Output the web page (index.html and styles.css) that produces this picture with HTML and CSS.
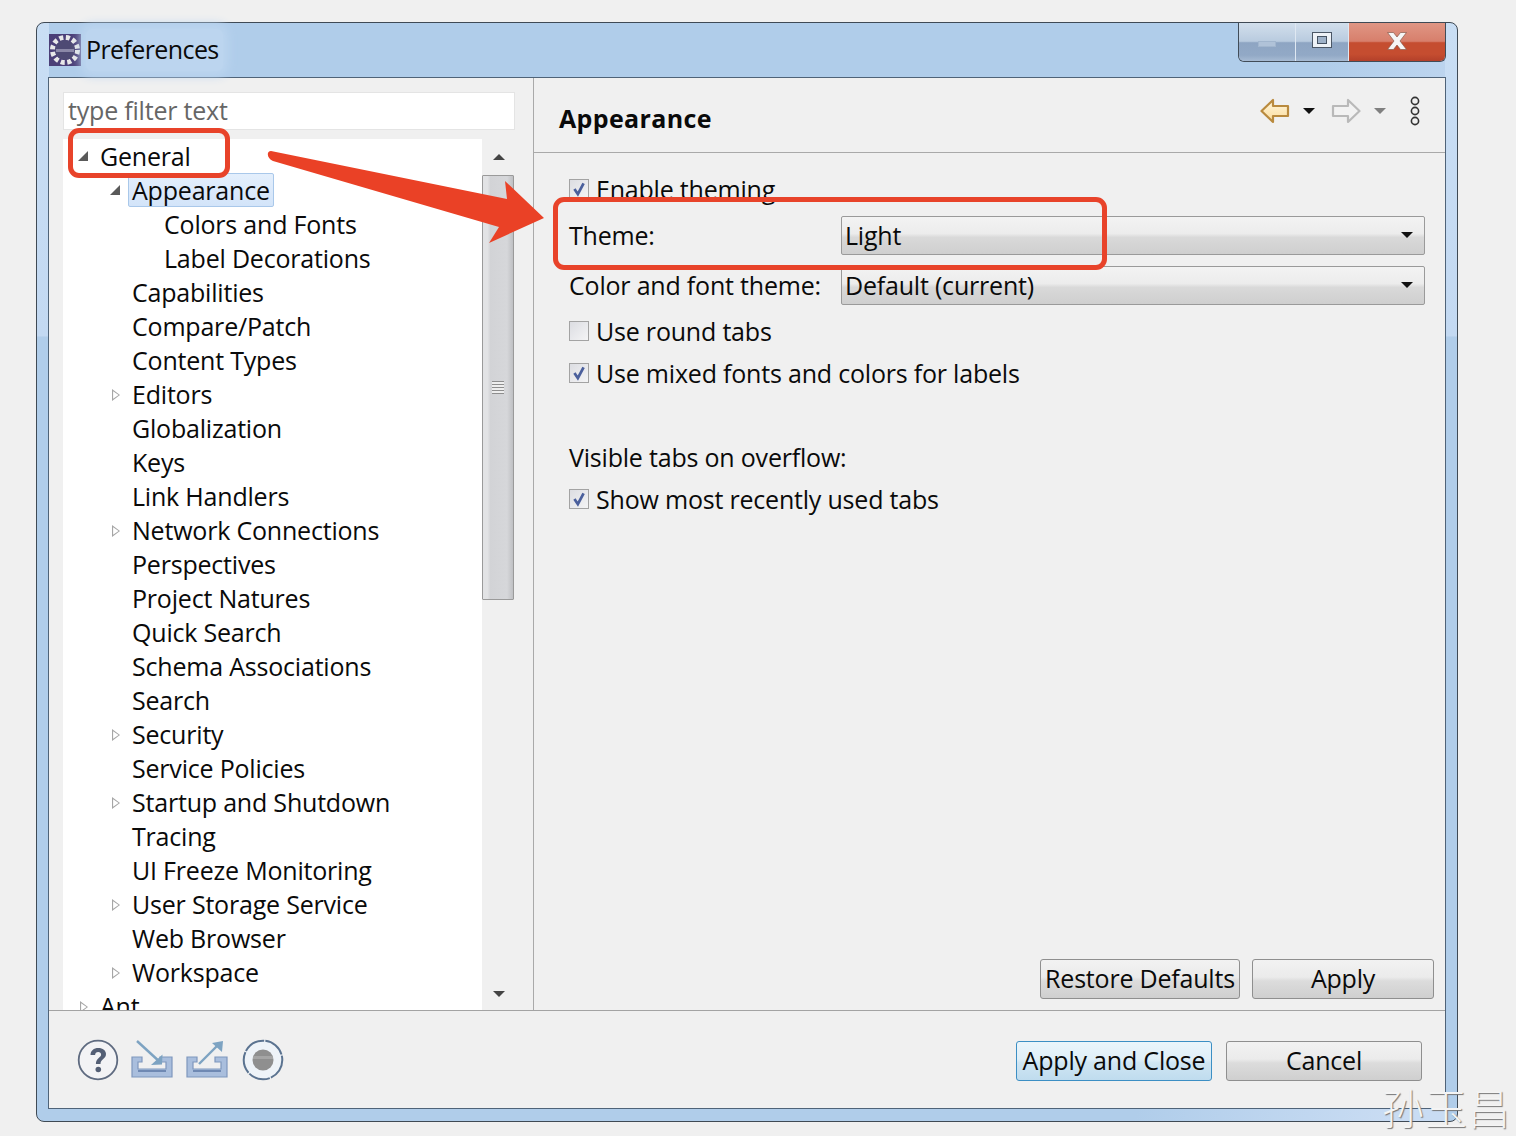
FILE: index.html
```html
<!DOCTYPE html>
<html lang="en">
<head>
<meta charset="utf-8">
<title>Preferences</title>
<link rel="stylesheet" href="styles.css">
</head>
<body>
<div class="window">
  <header class="titlebar">
    <div class="title">
      <svg class="app-icon" width="32" height="32" viewBox="0 0 32 32">
        <rect width="32" height="32" fill="#4b3f78"/>
        <circle cx="16" cy="16" r="12.5" fill="none" stroke="#e8e8e8" stroke-width="5" stroke-dasharray="4 2.6"/>
        <circle cx="16" cy="16" r="10" fill="#4e4a74"/>
        <rect x="7" y="15" width="18" height="3" fill="#8b88a8"/>
      </svg>
      <span class="title-text">Preferences</span>
    </div>
    <div class="caption">
      <div class="cap cap-min"><span class="min-glyph"></span></div>
      <div class="cap cap-max"><span class="max-glyph"><span></span></span></div>
      <div class="cap cap-close">
        <svg width="20" height="18" viewBox="0 0 20 18"><path d="M.5.5h6L10 5l3.500-4.500h6L13 9l6.500 8.500h-6L10 13l-3.500 4.500h-6L7 9z" fill="#f6f6f6" stroke="#8a5a4c" stroke-width=".7"/></svg>
      </div>
    </div>
  </header>

  <div class="client">
    <div class="panes">
      <aside class="left">
        <div class="filter">type filter text</div>
        <div class="tree-wrap">
          <ul class="tree">
            <li class="row l0"><i class="tw open"></i>General</li>
            <li class="row l1"><i class="tw open"></i><span class="sel">Appearance</span></li>
            <li class="row l2"><i class="tw"></i>Colors and Fonts</li>
            <li class="row l2"><i class="tw"></i>Label Decorations</li>
            <li class="row l1"><i class="tw"></i>Capabilities</li>
            <li class="row l1"><i class="tw"></i>Compare/Patch</li>
            <li class="row l1"><i class="tw"></i>Content Types</li>
            <li class="row l1"><i class="tw closed"></i>Editors</li>
            <li class="row l1"><i class="tw"></i>Globalization</li>
            <li class="row l1"><i class="tw"></i>Keys</li>
            <li class="row l1"><i class="tw"></i>Link Handlers</li>
            <li class="row l1"><i class="tw closed"></i>Network Connections</li>
            <li class="row l1"><i class="tw"></i>Perspectives</li>
            <li class="row l1"><i class="tw"></i>Project Natures</li>
            <li class="row l1"><i class="tw"></i>Quick Search</li>
            <li class="row l1"><i class="tw"></i>Schema Associations</li>
            <li class="row l1"><i class="tw"></i>Search</li>
            <li class="row l1"><i class="tw closed"></i>Security</li>
            <li class="row l1"><i class="tw"></i>Service Policies</li>
            <li class="row l1"><i class="tw closed"></i>Startup and Shutdown</li>
            <li class="row l1"><i class="tw"></i>Tracing</li>
            <li class="row l1"><i class="tw"></i>UI Freeze Monitoring</li>
            <li class="row l1"><i class="tw closed"></i>User Storage Service</li>
            <li class="row l1"><i class="tw"></i>Web Browser</li>
            <li class="row l1"><i class="tw closed"></i>Workspace</li>
            <li class="row l0"><i class="tw closed"></i>Ant</li>
          </ul>
          <div class="scrollbar">
            <div class="sb-arrow"><span class="tri-up"></span></div>
            <div class="sb-track">
              <div class="sb-thumb"><span class="grip"></span></div>
            </div>
            <div class="sb-arrow sb-down"><span class="tri-down"></span></div>
          </div>
        </div>
      </aside>

      <main class="right">
        <div class="page-head">
          <h1>Appearance</h1>
          <div class="nav-tools">
            <svg class="nav-arrow" width="30" height="26" viewBox="0 0 30 26"><defs><linearGradient id="bk" x1="0" y1="0" x2="0" y2="1"><stop offset="0" stop-color="#fff6dc"/><stop offset="1" stop-color="#fbdc9c"/></linearGradient></defs><path d="M1.500 13 13 2v6h15v10H13v6z" fill="url(#bk)" stroke="#b98a3e" stroke-width="2.200" stroke-linejoin="round"/></svg>
            <span class="drop dark"></span>
            <svg class="nav-arrow fwd" width="30" height="26" viewBox="0 0 30 26"><path d="M28.500 13 17 2v6H2v10h15v6z" fill="#f2f2f2" stroke="#b9b9b9" stroke-width="2.200" stroke-linejoin="round"/></svg>
            <span class="drop gray"></span>
            <svg class="more" width="12" height="30" viewBox="0 0 12 30"><g fill="none" stroke="#333" stroke-width="1.600"><circle cx="6" cy="5" r="3.600"/><circle cx="6" cy="15" r="3.600"/><circle cx="6" cy="25" r="3.600"/></g></svg>
          </div>
        </div>

        <div class="form">
          <label class="check first"><span class="box on"><svg width="16" height="16" viewBox="0 0 14 14"><path d="M3 7l3 4.500L11 2" fill="none" stroke="#4a5f9c" stroke-width="2.400"/></svg></span>Enable theming</label>
          <div class="field theme-field"><span class="field-label">Theme:</span><div class="select">Light<span class="drop dark"></span></div></div>
          <div class="field color-field"><span class="field-label">Color and font theme:</span><div class="select">Default (current)<span class="drop dark"></span></div></div>
          <label class="check round"><span class="box"></span>Use round tabs</label>
          <label class="check mixed"><span class="box on"><svg width="16" height="16" viewBox="0 0 14 14"><path d="M3 7l3 4.500L11 2" fill="none" stroke="#4a5f9c" stroke-width="2.400"/></svg></span>Use mixed fonts and colors for labels</label>
          <p class="group-label">Visible tabs on overflow:</p>
          <label class="check recent"><span class="box on"><svg width="16" height="16" viewBox="0 0 14 14"><path d="M3 7l3 4.500L11 2" fill="none" stroke="#4a5f9c" stroke-width="2.400"/></svg></span>Show most recently used tabs</label>
        </div>

        <div class="page-buttons">
          <button class="btn restore">Restore Defaults</button>
          <button class="btn apply">Apply</button>
        </div>
      </main>
    </div>

    <footer class="footer">
      <div class="tools">
        <svg width="42" height="42" viewBox="0 0 42 42"><circle cx="21" cy="21" r="19.300" fill="#f3f3f5" stroke="#5f6b80" stroke-width="1.800"/><path d="M13.500 16c0-4.300 3.300-7 7.800-7 4.500 0 7.700 2.500 7.700 6.100 0 5-5.500 5-5.500 9.900h-4.600c0-6.400 5.200-6.200 5.200-9.600 0-1.500-1.100-2.500-2.900-2.500-1.900 0-3 1.200-3.100 3.100z" fill="#545f75"/><circle cx="21.300" cy="30.500" r="2.800" fill="#545f75"/></svg>
        <svg width="44" height="42" viewBox="0 0 44 42"><path d="M2 18h10v5H8v7h28v-7h-6v-5h12v20H2z" fill="#a9bedd" stroke="#7f97bd" stroke-width="1.200"/><path d="M8 32h28" stroke="#6f89b3" stroke-width="2"/><path d="M7 2l24 22" stroke="#7da3c2" stroke-width="2.400"/><path d="M21 26l11-.5.500-10z" fill="#7da3c2"/></svg>
        <svg width="44" height="42" viewBox="0 0 44 42"><path d="M2 18h10v5H8v7h28v-7h-6v-5h12v20H2z" fill="#a9bedd" stroke="#7f97bd" stroke-width="1.200"/><path d="M8 32h28" stroke="#6f89b3" stroke-width="2"/><path d="M14 25L35 4" stroke="#7da3c2" stroke-width="2.400"/><path d="M27 4l11-2-1 11z" fill="#7da3c2"/></svg>
        <svg class="rec" width="42" height="42" viewBox="0 0 42 42"><circle cx="21" cy="21" r="19.300" fill="#eef3f8" stroke="#5b7390" stroke-width="2" stroke-dasharray="22 1.200"/><circle cx="21" cy="21" r="10.500" fill="#8f8f8f"/><path d="M11 18.500h20" stroke="#a5a5a5" stroke-width="3"/></svg>
      </div>
      <div class="dialog-buttons">
        <button class="btn default">Apply and Close</button>
        <button class="btn cancel">Cancel</button>
      </div>
    </footer>
  </div>
</div>

<div class="mark mark-general"></div>
<div class="mark mark-theme"></div>
<svg class="mark-arrow" width="300" height="110" viewBox="0 0 300 110"><path d="M5 10 241 58 239 40 278 77 223 102 233 86 7 20C1 18 0 10 5 10z" fill="#ea4126"/></svg>
<div class="watermark">孙玉昌</div>
</body>
</html>
```
FILE: styles.css
```css
* { box-sizing: border-box; }
html, body { margin: 0; height: 1136px; overflow: hidden; }
body {
  position: relative;
  padding: 22px 0 0 36px;
  background: #f0f0f0;
  font-family: "Open Sans", "Noto Sans", sans-serif;
  font-size: 25px;
  letter-spacing: -.2px;
  color: #0a0a0a;
}
.window {
  width: 1422px;
  height: 1100px;
  padding: 0 11px 12px;
  border: 1px solid #3f4a55;
  border-radius: 8px;
  background:
    linear-gradient(#c9def4 0, #c3d9f2 28.500%, #b0cdea 28.600%, #b0cdea 100%) left / 12px 100% no-repeat,
    linear-gradient(#c9def4 0, #c3d9f2 28.500%, #b0cdea 28.600%, #b0cdea 100%) right / 12px 100% no-repeat,
    linear-gradient(100deg, #b0cdea 80%, #c9dcf3 96%);
}
.titlebar {
  height: 54px;
  display: flex;
  justify-content: space-between;
  align-items: flex-start;
}
.title { display: flex; align-items: center; height: 54px; gap: 5px; padding-left: 1px; }
.app-icon { display: block; }
.title-text {
  font-size: 25px;
  letter-spacing: -.6px;
  padding: 3px 4px 5px 0;
  background: #bcd5ef;
  box-shadow: 0 0 10px 5px #bcd5ef;
  border-radius: 6px;
}
.caption {
  display: flex;
  height: 39px;
  border: 1px solid #414c58;
  border-top: 0;
  border-radius: 0 0 6px 6px;
  overflow: hidden;
}
.cap { display: flex; align-items: center; justify-content: center; height: 38px; }
.cap-min, .cap-max {
  background: linear-gradient(#d2dfec 0, #b9cbdf 48%, #8ea5c3 52%, #92a9c6 85%, #a7bbd3 100%);
  border-right: 1px solid #dfe8f2;
}
.cap-min { width: 57px; }
.cap-max { width: 53px; padding-bottom: 4px; }
.cap-close {
  width: 96px;
  padding-bottom: 3px;
  background: linear-gradient(#e09684 0, #d77f6c 48%, #c54d30 52%, #c54d30 82%, #b3402a 100%);
}
.min-glyph { width: 18px; height: 6px; margin-top: 3px; background: #b0c2d8; border: 1px solid #a2b6ce; }
.max-glyph { display: flex; align-items: center; justify-content: center; width: 20px; height: 16px; background: #eef2f7; border: 1px solid #4b5766; }
.max-glyph span { display: block; width: 10px; height: 8px; background: #9fb2c9; border: 1px solid #465363; }

.client {
  height: 1032px;
  border: 1px solid #4f6378;
  background: #f0f0f0;
  display: flex;
  flex-direction: column;
}
.panes { display: flex; height: 933px; border-bottom: 1px solid #a3a3a3; }
.left { width: 485px; flex: none; padding: 14px 18px 0 14px; border-right: 1px solid #a9a9a9; display: flex; flex-direction: column; }
.filter {
  height: 38px;
  line-height: 35px;
  padding-left: 4px;
  background: #fff;
  border: 1px solid #e4e4e4;
  color: #666;
  flex: none;
}
.tree-wrap { display: flex; height: 872px; margin: 9px 1px 0 0; overflow: hidden; }
.tree { flex: 1; list-style: none; margin: 0; padding: 0; background: #fff; overflow: hidden; }
.row { height: 34px; display: flex; align-items: center; white-space: nowrap; }
.l0 { padding-left: 15px; }
.l1 { padding-left: 47px; }
.l2 { padding-left: 79px; }
.tw { flex: none; width: 22px; height: 12px; position: relative; }
.tw.open::before {
  content: ""; position: absolute; left: 0; top: 1px;
  border-left: 10px solid transparent;
  border-bottom: 10px solid #5a5a5a;
}
.tw.closed::before {
  content: ""; position: absolute; left: 2px; top: 1px;
  width: 8px; height: 12px;
  background: #a6a6a6;
  clip-path: polygon(0 0, 100% 50%, 0 100%, 0 0, 14% 18%, 14% 82%, 82% 50%, 14% 18%);
}
.sel {
  margin-left: -4px;
  padding: 0 3px;
  height: 34px;
  line-height: 32px;
  background: linear-gradient(#e4effc, #d3e4f9);
  border: 1px solid #a9c8ea;
  border-radius: 2px;
}
.scrollbar { width: 32px; flex: none; display: flex; flex-direction: column; }
.sb-arrow { height: 36px; flex: none; display: flex; align-items: center; justify-content: center; }
.sb-down { height: 32px; }
.sb-track { flex: 1; }
.sb-thumb {
  height: 425px;
  border: 1px solid #9a9a9a;
  border-radius: 1px;
  background: linear-gradient(90deg, #e2e3e5 0, #e2e3e5 15%, #d2d3d6 25%, #d6d7da 80%, #bfc0c3 100%);
  display: flex; align-items: center; justify-content: center;
}
.grip {
  display: block; width: 12px; height: 13px;
  background: repeating-linear-gradient(#8e8e8e 0, #8e8e8e 1px, #eee 1px, #eee 3px);
}
.tri-up { border-left: 6px solid transparent; border-right: 6px solid transparent; border-bottom: 6px solid #444; margin-left: 2px; }
.tri-down { border-left: 6px solid transparent; border-right: 6px solid transparent; border-top: 6px solid #444; margin-left: 2px; }

.right { flex: 1; display: flex; flex-direction: column; min-width: 0; }
.page-head {
  height: 75px;
  flex: none;
  border-bottom: 1px solid #a9a9a9;
  display: flex;
  align-items: center;
  justify-content: space-between;
  padding: 2px 24px 0 26px;
}
h1 { margin: 4px 0 0 -1px; font-size: 25px; font-weight: 700; letter-spacing: .35px; }
.nav-tools { display: flex; align-items: center; padding-bottom: 10px; }
.nav-arrow { display: block; }
.fwd { margin-left: 16px; }
.nav-tools .drop { margin-left: 13px; }
.more { margin-left: 23px; }
.drop { display: inline-block; width: 0; height: 0; border-left: 6px solid transparent; border-right: 6px solid transparent; }
.drop.dark { border-top: 6px solid #111; }
.drop.gray { border-top: 6px solid #808080; }

.form { flex: none; padding: 19px 20px 0 35px; }
.check { display: flex; align-items: center; height: 34px; }
.box {
  width: 20px; height: 20px; margin-right: 7px; flex: none;
  background: linear-gradient(135deg, #dcdde2, #f4f4f5);
  border: 1px solid #a3a3a3;
  display: flex; align-items: center; justify-content: center;
}
.field { display: flex; align-items: center; height: 39px; }
.field-label { width: 272px; flex: none; padding-bottom: 2px; }
.theme-field { margin-top: 10px; }
.color-field { margin-top: 11px; }
.select {
  flex: 1;
  height: 39px;
  padding: 0 11px 2px 3px;
  border: 1px solid #9a9a9a;
  border-radius: 2px;
  display: flex; justify-content: space-between; align-items: center;
  background: linear-gradient(#f3f3f3 0, #ececec 45%, #d9d9d9 55%, #cfcfcf 100%);
}
.round { margin-top: 9px; }
.mixed { margin-top: 8px; }
.group-label { margin: 50px 0 0; height: 34px; line-height: 34px; }
.recent { margin-top: 8px; }

.page-buttons { margin-top: auto; display: flex; justify-content: flex-end; gap: 12px; padding: 0 11px 11px 0; }
.btn {
  font: inherit;
  letter-spacing: inherit;
  color: inherit;
  height: 40px;
  padding: 0 0 2px;
  white-space: nowrap;
  border: 1px solid #8f8f8f;
  border-radius: 3px;
  background: linear-gradient(#f2f2f2 0, #ebebeb 45%, #dcdcdc 55%, #cfcfcf 100%);
}
.restore { width: 200px; }
.apply { width: 182px; }
.footer { flex: 1; display: flex; justify-content: space-between; padding: 28px 23px 0 28px; }
.tools { display: flex; gap: 11px; height: 44px; align-items: flex-start; }
.tools svg { display: block; flex: none; }
.tools .rec { margin-left: 2px; }
.dialog-buttons { display: flex; gap: 14px; padding-top: 2px; }
.default {
  width: 196px;
  border-color: #3c8fc4;
  background: linear-gradient(#eaf5fb 0, #e0eff8 45%, #cfe5f3 55%, #bfdcee 100%);
}
.cancel { width: 196px; }

.mark { position: absolute; border: 5px solid #e8432a; border-radius: 11px; }
.mark-general { left: 68px; top: 128px; width: 162px; height: 50px; }
.mark-theme { left: 553px; top: 197px; width: 554px; height: 73px; }
.mark-arrow { position: absolute; left: 266px; top: 141px; }
.watermark {
  position: absolute;
  right: 5px;
  bottom: 7px;
  font-family: "Noto Sans CJK SC", sans-serif;
  font-weight: 300;
  font-size: 42px;
  line-height: 44px;
  letter-spacing: 1px;
  color: #f4f4f4;
  text-shadow: 1px 1px 1px #777;
}
```
